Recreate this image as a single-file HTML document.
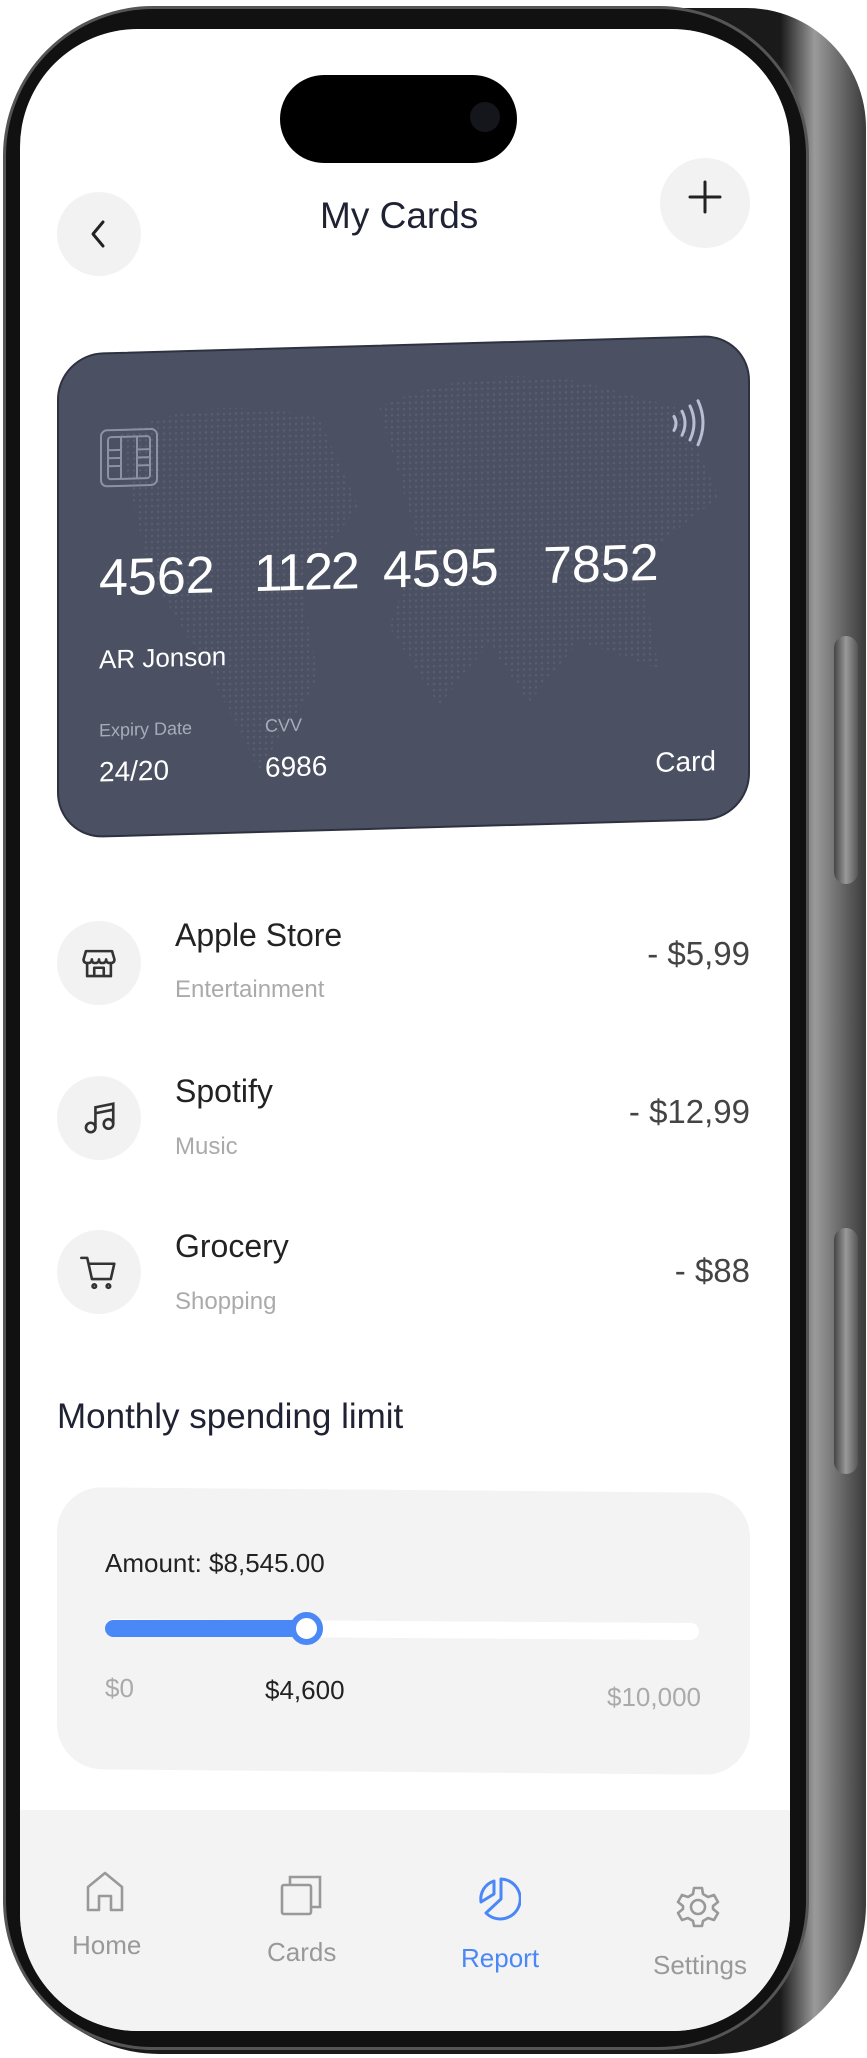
<!DOCTYPE html>
<html><head><meta charset="utf-8"><style>
*{margin:0;padding:0;box-sizing:border-box}
body{width:867px;height:2058px;background:#fff;position:relative;overflow:hidden;font-family:"Liberation Sans",sans-serif}
.abs{position:absolute}
.t{position:absolute;white-space:nowrap}
</style></head><body>
<!-- phone frame -->
<div class="abs" style="left:10px;top:8px;width:856px;height:2046px;border-radius:150px 120px 150px 150px;background:linear-gradient(90deg,#1a1a1a 0%,#1a1a1a 90%,#5a5a5a 92%,#9a9a9a 94%,#6a6a6a 97%,#3a3a3a 100%)"></div>
<div class="abs" style="left:3px;top:6px;width:806px;height:2044px;border-radius:150px;background:#111;border:3px solid #555"></div>
<div class="abs" style="left:834px;top:636px;width:24px;height:248px;border-radius:12px;background:linear-gradient(90deg,#444,#999,#555);"></div>
<div class="abs" style="left:834px;top:1228px;width:24px;height:246px;border-radius:12px;background:linear-gradient(90deg,#444,#999,#555);"></div>
<!-- screen -->
<div class="abs" style="left:20px;top:29px;width:770px;height:2002px;border-radius:118px;background:#fff;overflow:hidden">
  <div class="abs" style="left:0;top:1781px;width:770px;height:240px;background:#f3f3f3"></div>
</div>
<!-- island -->
<div class="abs" style="left:280px;top:75px;width:237px;height:88px;border-radius:44px;background:#000"></div>
<div class="abs" style="left:470px;top:102px;width:30px;height:30px;border-radius:15px;background:#15161c"></div>

<!-- header -->
<div class="abs" style="left:57px;top:192px;width:84px;height:84px;border-radius:42px;background:#f2f2f2"></div>
<svg class="abs" style="left:86px;top:218px" width="26" height="32" viewBox="0 0 26 32"><path d="M17 4 L7 16 L17 28" fill="none" stroke="#222" stroke-width="3" stroke-linecap="round" stroke-linejoin="round"/></svg>
<div class="abs" style="left:660px;top:158px;width:90px;height:90px;border-radius:45px;background:#f2f2f2"></div>
<svg class="abs" style="left:688px;top:180px" width="34" height="34"><path d="M17 2V32M2 17H32" stroke="#222" stroke-width="3" stroke-linecap="round"/></svg>
<div class="t" style="left:320px;top:195px;font-size:37px;color:#1f2233">My Cards</div>

<!-- card -->
<div class="abs" style="left:57px;top:344px;width:693px;height:485px;transform:skewY(-1.6deg);border-radius:46px;background:#4b5162;border:2px solid #2e3240;overflow:hidden">
  <svg class="abs" style="left:0;top:0;opacity:.18" width="693" height="485"><defs><pattern id="d" width="6" height="6" patternUnits="userSpaceOnUse"><circle cx="3" cy="3" r="1.2" fill="#9aa0b5"/></pattern></defs>
  <path d="M60 80 Q150 40 260 70 L300 160 L240 230 L260 330 L200 420 L150 320 L90 220 Z M320 60 Q420 20 520 40 L620 70 L660 160 L580 220 L600 330 L520 300 L470 360 L430 300 L380 360 L330 280 L360 200 Z" fill="url(#d)"/></svg>
  <svg class="abs" style="left:40px;top:74px" width="60" height="60" viewBox="0 0 60 60" fill="none" stroke="#8c92a3" stroke-width="2"><rect x="2" y="2" width="56" height="56" rx="6"/><rect x="9" y="9" width="42" height="42" rx="3"/><path d="M9 22H22V38H9M51 22H38V38H51M22 9V22M38 9V22M22 38V51M38 38V51M9 30H22M38 30H51"/></svg>
  <svg class="abs" style="left:610px;top:60px" width="40" height="50" viewBox="0 0 40 50" fill="none" stroke="#b8bfd4" stroke-width="3" stroke-linecap="round"><path d="M5 18Q9 25 5 32M13 13Q19 25 13 37M21 8Q29 25 21 42M29 3Q39 25 29 47"/></svg>
  <div class="t" style="left:40px;top:194px;font-size:52px;color:#fff;letter-spacing:0px">4562</div>
  <div class="t" style="left:195px;top:194px;font-size:52px;color:#fff;letter-spacing:-2px">1122</div>
  <div class="t" style="left:324px;top:194px;font-size:52px;color:#fff;letter-spacing:0px">4595</div>
  <div class="t" style="left:484px;top:194px;font-size:52px;color:#fff;letter-spacing:0px">7852</div>
  <div class="t" style="left:40px;top:290px;font-size:26px;color:#fff">AR Jonson</div>
  <div class="t" style="left:40px;top:366px;font-size:18px;color:#a7acbb">Expiry Date</div>
  <div class="t" style="left:206px;top:366px;font-size:18px;color:#a7acbb">CVV</div>
  <div class="t" style="left:40px;top:402px;font-size:28px;color:#fff">24/20</div>
  <div class="t" style="left:206px;top:402px;font-size:28px;color:#fff">6986</div>
  <div class="t" style="right:32px;top:408px;font-size:28px;color:#fff">Card</div>
</div>

<!-- transactions -->
<div class="abs" style="left:57px;top:921px;width:84px;height:84px;border-radius:42px;background:#f2f2f2"></div>
<svg class="abs" style="left:80px;top:944px" width="38" height="38" viewBox="0 0 32 32" fill="none" stroke="#333" stroke-width="2.2" stroke-linejoin="round"><path d="M5 6H27L29 13Q29 16 25.5 16Q22 16 22 13Q22 16 18.5 16Q16 16 16 13Q16 16 12.5 16Q10 16 10 13Q10 16 6.5 16Q3 16 3 13Z"/><path d="M6 16V27H26V16M12 27V20H20V27"/></svg>
<div class="t" style="left:175px;top:917px;font-size:32px;color:#222">Apple Store</div>
<div class="t" style="left:175px;top:976px;font-size:24px;color:#aaa">Entertainment</div>
<div class="t" style="right:117px;top:935px;font-size:33px;color:#444">- $5,99</div>

<div class="abs" style="left:57px;top:1076px;width:84px;height:84px;border-radius:42px;background:#f2f2f2"></div>
<svg class="abs" style="left:80px;top:1099px" width="38" height="38" viewBox="0 0 32 32" fill="none" stroke="#333" stroke-width="2.2"><circle cx="9" cy="24" r="4"/><circle cx="24" cy="21" r="4"/><path d="M13 24V7L28 4V21M13 12L28 9"/></svg>
<div class="t" style="left:175px;top:1073px;font-size:32px;color:#222">Spotify</div>
<div class="t" style="left:175px;top:1133px;font-size:24px;color:#aaa">Music</div>
<div class="t" style="right:117px;top:1093px;font-size:33px;color:#444">- $12,99</div>

<div class="abs" style="left:57px;top:1230px;width:84px;height:84px;border-radius:42px;background:#f2f2f2"></div>
<svg class="abs" style="left:79px;top:1252px" width="40" height="40" viewBox="0 0 34 34" fill="none" stroke="#333" stroke-width="2.2" stroke-linecap="round" stroke-linejoin="round"><path d="M2 5H7L11 23H27L30 10H9"/><circle cx="13" cy="29" r="1.5"/><circle cx="25" cy="29" r="1.5"/></svg>
<div class="t" style="left:175px;top:1228px;font-size:32px;color:#222">Grocery</div>
<div class="t" style="left:175px;top:1288px;font-size:24px;color:#aaa">Shopping</div>
<div class="t" style="right:117px;top:1252px;font-size:33px;color:#444">- $88</div>

<div class="t" style="left:57px;top:1397px;font-size:35px;color:#1f2233">Monthly spending limit</div>

<!-- limit panel -->
<div class="abs" style="left:57px;top:1490px;width:693px;height:282px;border-radius:45px;background:#f3f3f3;transform:skewY(.5deg)"></div>
<div class="t" style="left:105px;top:1548px;font-size:26px;color:#222">Amount: $8,545.00</div>
<div class="abs" style="left:105px;top:1621px;width:594px;height:17px;border-radius:9px;background:#fff;transform:rotate(.4deg)"></div>
<div class="abs" style="left:105px;top:1620px;width:205px;height:17px;border-radius:9px;background:#4a87f7"></div>
<div class="abs" style="left:290px;top:1612px;width:33px;height:33px;border-radius:17px;background:#fff;border:6px solid #4a87f7"></div>
<div class="t" style="left:105px;top:1673px;font-size:26px;color:#aaa">$0</div>
<div class="t" style="left:265px;top:1675px;font-size:26px;color:#222">$4,600</div>
<div class="t" style="right:166px;top:1682px;font-size:26px;color:#aaa">$10,000</div>

<!-- nav -->
<svg class="abs" style="left:85px;top:1870px" width="40" height="42" viewBox="0 0 40 42" fill="none" stroke="#999" stroke-width="2.6" stroke-linejoin="round"><path d="M3 17L20 3L37 17V40H26V26H14V40H3Z"/></svg>
<div class="t" style="left:72px;top:1930px;font-size:26px;color:#999">Home</div>
<svg class="abs" style="left:280px;top:1874px" width="42" height="42" viewBox="0 0 42 42" fill="none" stroke="#999" stroke-width="2.6"><rect x="2" y="11" width="29" height="29" rx="2"/><path d="M10 11V3H40V33H31"/></svg>
<div class="t" style="left:267px;top:1937px;font-size:26px;color:#999">Cards</div>
<svg class="abs" style="left:477px;top:1876px" width="44" height="46" viewBox="0 0 44 46" fill="none" stroke="#4a87f7" stroke-width="3" stroke-linejoin="round"><path d="M24 3A20 20 0 1 1 9 37L24 23Z"/><path d="M17 5A19 19 0 0 0 4 26L17 18Z"/></svg>
<div class="t" style="left:461px;top:1943px;font-size:26px;color:#4a87f7">Report</div>
<svg class="abs" style="left:676px;top:1885px" width="44" height="44" viewBox="0 0 44 44" fill="none" stroke="#999" stroke-width="2.6" stroke-linejoin="round"><path d="M18 3H26L27 9L32 12L38 10L42 17L37 21V24L42 28L38 35L32 33L27 36L26 41H18L17 36L12 33L6 35L2 28L7 24V21L2 17L6 10L12 12L17 9Z"/><circle cx="22" cy="22" r="7"/></svg>
<div class="t" style="left:653px;top:1950px;font-size:26px;color:#999">Settings</div>
</body></html>
